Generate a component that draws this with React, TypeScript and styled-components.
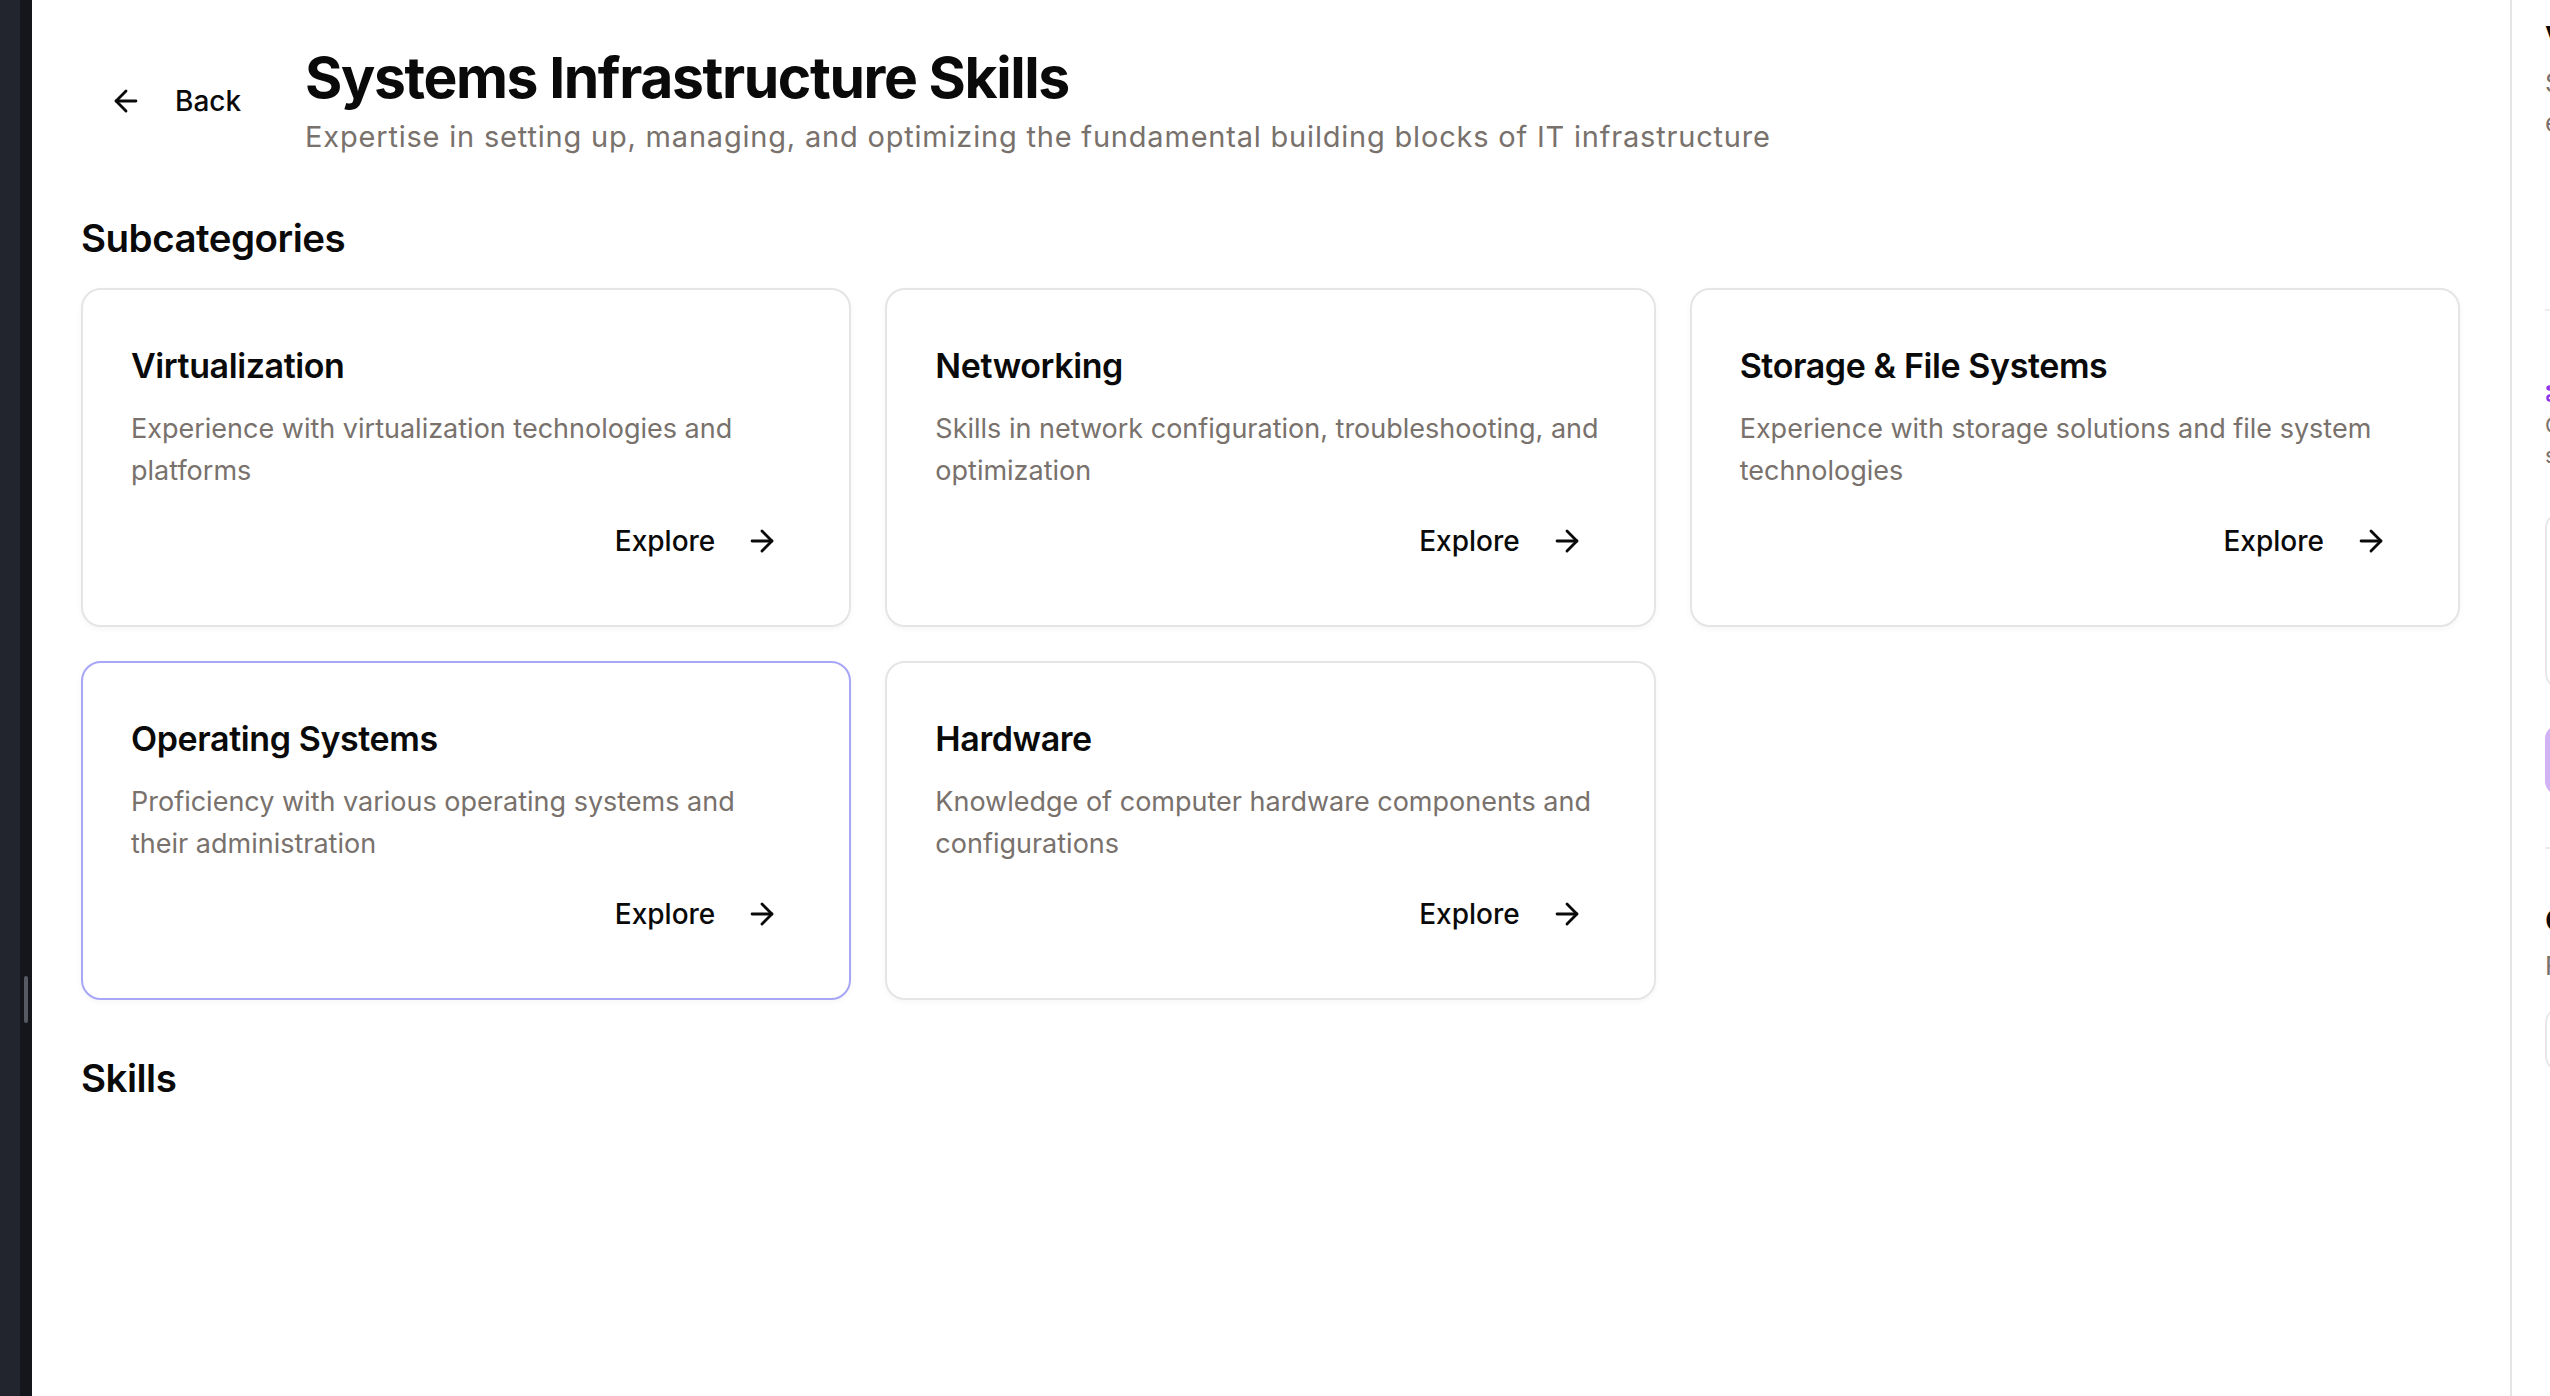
import React from "react";
import styled, { createGlobalStyle } from "styled-components";
import { ArrowLeft, ArrowRight, Sparkles } from "lucide-react";

const GlobalStyle = createGlobalStyle`
  html, body {
    margin: 0;
    padding: 0;
    background: #ffffff;
    overflow: hidden;
    font-family: "Inter", "Noto Sans", sans-serif;
    color: #0a0a0a;
  }
  * { box-sizing: border-box; }
`;

const Shell = styled.div`
  display: flex;
  width: 100vw;
  height: 100vh;
  overflow: hidden;
`;

const Rail = styled.div`
  flex: 0 0 32px;
  display: flex;
`;

const RailStrip = styled.div<{ $dark?: boolean }>`
  width: ${(p) => (p.$dark ? "12px" : "20px")};
  background: ${(p) => (p.$dark ? "#14161c" : "#22252d")};
  position: relative;
`;

const ScrollThumb = styled.div`
  position: absolute;
  top: 976px;
  left: 4px;
  width: 4px;
  height: 47px;
  border-radius: 2px;
  background: #565a63;
`;

const Main = styled.main`
  flex: 0 0 2478px;
  padding: 42px 50px 0 49px;
`;

const Header = styled.header`
  display: flex;
  align-items: center;
  gap: 36px;
`;

const BackButton = styled.button`
  display: flex;
  align-items: center;
  gap: 32px;
  height: 72px;
  padding: 0 28px;
  border: none;
  background: transparent;
  font-family: inherit;
  font-size: 28px;
  font-weight: 500;
  color: #0a0a0a;
  cursor: pointer;
`;

const TitleBlock = styled.div`
  display: flex;
  flex-direction: column;
`;

const Title = styled.h1`
  margin: 0;
  font-size: 57px;
  line-height: 72px;
  font-weight: 700;
  letter-spacing: -1.4px;
`;

const Subtitle = styled.p`
  margin: 0;
  font-size: 29px;
  line-height: 46px;
  letter-spacing: 0.8px;
  color: #78716c;
`;

const Section = styled.section<{ $gap: number }>`
  margin-top: ${(p) => p.$gap}px;
`;

const SectionTitle = styled.h2`
  margin: 0;
  font-size: 38.5px;
  line-height: 56px;
  font-weight: 600;
  letter-spacing: -0.5px;
`;

const Grid = styled.div`
  margin-top: 22px;
  display: grid;
  grid-template-columns: repeat(3, 1fr);
  gap: 34px;
`;

const Card = styled.div<{ $active?: boolean }>`
  display: flex;
  flex-direction: column;
  padding: 50px 48px 48px;
  border: 2px solid ${(p) => (p.$active ? "#a8a6f6" : "#e5e5e5")};
  border-radius: 20px;
  background: #ffffff;
  box-shadow: 0 2px 6px rgba(0, 0, 0, 0.04);
`;

const CardTitle = styled.h3`
  margin: 0;
  font-size: 34px;
  line-height: 52px;
  font-weight: 600;
  letter-spacing: -0.4px;
`;

const CardDesc = styled.p`
  margin: 16px 0 0;
  max-width: 665px;
  font-size: 27px;
  line-height: 42px;
  color: #78716c;
`;

const CardFooter = styled.div`
  display: flex;
  justify-content: flex-end;
  margin-top: 13px;
`;

const ExploreButton = styled.button`
  display: flex;
  align-items: center;
  gap: 30px;
  height: 72px;
  padding: 0 22px;
  border: none;
  background: transparent;
  font-family: inherit;
  font-size: 28px;
  font-weight: 500;
  color: #0a0a0a;
  cursor: pointer;
`;

const Aside = styled.aside`
  flex: 0 0 640px;
  border-left: 2px solid #e5e5e5;
  padding: 15px 32px 0 33px;
  display: flex;
  flex-direction: column;
`;

const AsideHeading = styled.div<{ $accent?: boolean }>`
  display: flex;
  align-items: center;
  gap: 12px;
  font-size: 30px;
  line-height: 44px;
  font-weight: 600;
  color: ${(p) => (p.$accent ? "#9333ea" : "#0a0a0a")};
`;

const AsideText = styled.p<{ $small?: boolean }>`
  margin: ${(p) => (p.$small ? "0" : "4px 0 0")};
  font-size: ${(p) => (p.$small ? "22px" : "26px")};
  line-height: ${(p) => (p.$small ? "30px" : "40px")};
  color: #78716c;
`;

const Divider = styled.hr<{ $top: number }>`
  margin: ${(p) => p.$top}px 0 0;
  border: none;
  border-top: 2px solid #ececec;
`;

const Field = styled.div<{ $height: number; $top: number }>`
  margin-top: ${(p) => p.$top}px;
  height: ${(p) => p.$height}px;
  border: 2px solid #e8e8e8;
  border-radius: 16px;
`;

const SubmitButton = styled.button`
  margin-top: 36px;
  height: 70px;
  border: none;
  border-radius: 14px;
  background: #d1b3f4;
  color: #ffffff;
  font-family: inherit;
  font-size: 26px;
  font-weight: 500;
`;

const subcategories = [
  {
    title: "Virtualization",
    desc: "Experience with virtualization technologies and platforms",
  },
  {
    title: "Networking",
    desc: "Skills in network configuration, troubleshooting, and optimization",
  },
  {
    title: "Storage & File Systems",
    desc: "Experience with storage solutions and file system technologies",
  },
  {
    title: "Operating Systems",
    desc: "Proficiency with various operating systems and their administration",
    active: true,
  },
  {
    title: "Hardware",
    desc: "Knowledge of computer hardware components and configurations",
  },
];

const App = () => {
  return (
    <Shell>
      <GlobalStyle />
      <Rail>
        <RailStrip />
        <RailStrip $dark>
          <ScrollThumb />
        </RailStrip>
      </Rail>

      <Main>
        <Header>
          <BackButton>
            <ArrowLeft size={34} strokeWidth={2} />
            Back
          </BackButton>
          <TitleBlock>
            <Title>Systems Infrastructure Skills</Title>
            <Subtitle>
              Expertise in setting up, managing, and optimizing the fundamental
              building blocks of IT infrastructure
            </Subtitle>
          </TitleBlock>
        </Header>

        <Section $gap={50}>
          <SectionTitle>Subcategories</SectionTitle>
          <Grid>
            {subcategories.map((s) => (
              <Card key={s.title} $active={s.active}>
                <CardTitle>{s.title}</CardTitle>
                <CardDesc>{s.desc}</CardDesc>
                <CardFooter>
                  <ExploreButton>
                    Explore
                    <ArrowRight size={34} strokeWidth={2} />
                  </ExploreButton>
                </CardFooter>
              </Card>
            ))}
          </Grid>
        </Section>

        <Section $gap={50}>
          <SectionTitle>Skills</SectionTitle>
        </Section>
      </Main>

      <Aside>
        <AsideHeading>Validate Skill</AsideHeading>
        <AsideText>
          Select a skill to see how it is
          <br />
          endorsed by your peers.
        </AsideText>
        <Divider $top={166} />
        <AsideHeading $accent style={{ marginTop: 55 }}>
          <Sparkles size={30} />
          AI Assessment
        </AsideHeading>
        <AsideText $small>
          Compare your experience against
          <br />
          similar profiles.
        </AsideText>
        <Field $top={42} $height={177} />
        <SubmitButton>Run assessment</SubmitButton>
        <Divider $top={52} />
        <AsideHeading style={{ marginTop: 49 }}>Comments</AsideHeading>
        <AsideText>Feedback from reviewers</AsideText>
        <Field $top={21} $height={65} />
      </Aside>
    </Shell>
  );
};

export default App;
